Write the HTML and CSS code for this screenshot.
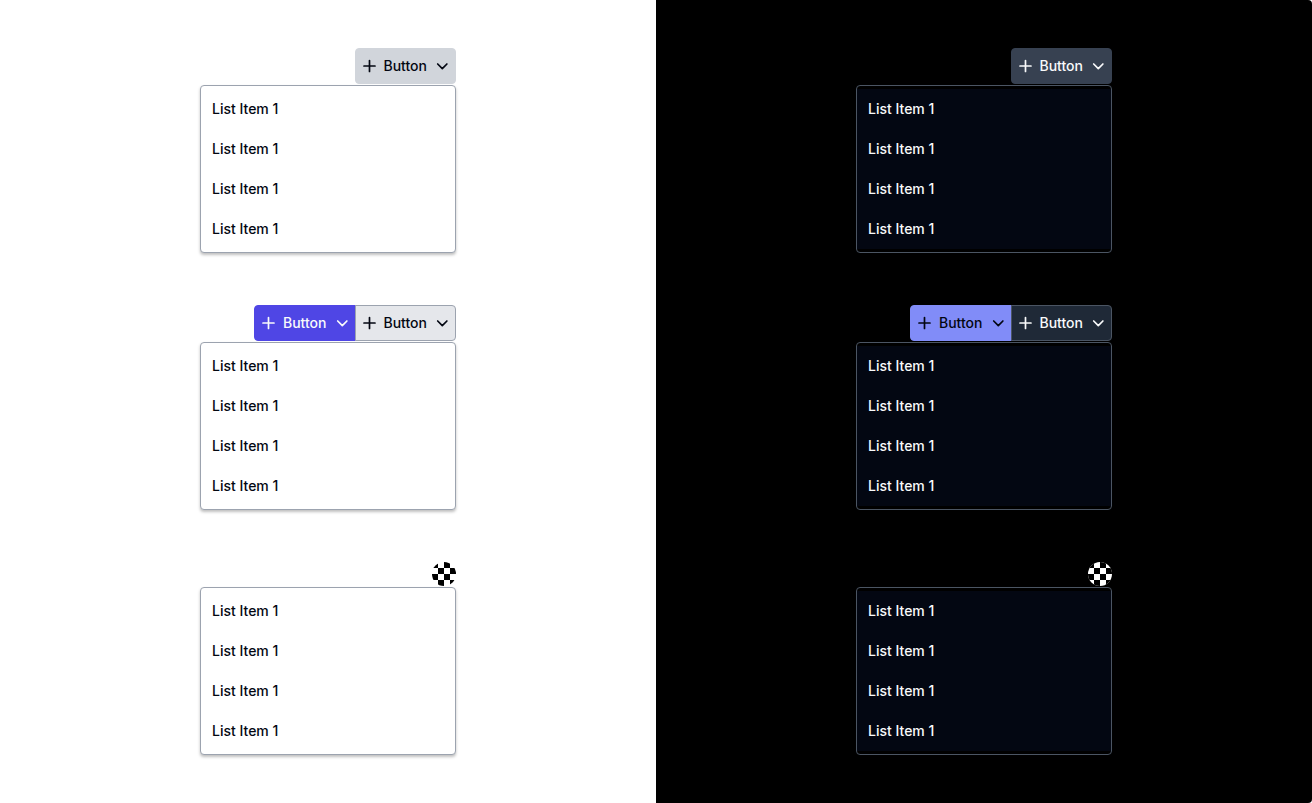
FILE: index.html
```html
<!DOCTYPE html>
<html lang="en">
<head>
<meta charset="utf-8">
<meta name="viewport" content="width=device-width, initial-scale=1">
<title>Dropdowns</title>
<link rel="stylesheet" href="styles.css">
</head>
<body>
<svg class="symbols" aria-hidden="true">
  <symbol id="plus" viewBox="0 0 20 20"><path d="M10.500 4.500v11M5 10h11"/></symbol>
  <symbol id="chevron" viewBox="0 0 20 20"><path d="M5.700 8l4.600 4.600L14.900 8"/></symbol>
  <symbol id="checker" viewBox="0 0 24 24">
    <path fill="#fff" d="M0 0h24v24H0z"/>
    <path d="M0 0h6v6H0zM12 0h6v6h-6zM6 6h6v6H6zM18 6h6v6h-6zM0 12h6v6H0zM12 12h6v6h-6zM6 18h6v6H6zM18 18h6v6h-6z"/>
  </symbol>
</svg>
<main class="themes">
  <section class="theme theme-light">
    <div class="dropdown">
      <div class="triggers"><button class="button base"><svg class="icon"><use href="#plus"/></svg>Button<svg class="icon"><use href="#chevron"/></svg></button></div>
      <ul class="menu"><li><button class="item">List Item 1</button></li><li><button class="item">List Item 1</button></li><li><button class="item">List Item 1</button></li><li><button class="item">List Item 1</button></li></ul>
    </div>
    <div class="dropdown">
      <div class="triggers"><button class="button primary"><svg class="icon"><use href="#plus"/></svg>Button<svg class="icon"><use href="#chevron"/></svg></button><button class="button secondary"><svg class="icon"><use href="#plus"/></svg>Button<svg class="icon"><use href="#chevron"/></svg></button></div>
      <ul class="menu"><li><button class="item">List Item 1</button></li><li><button class="item">List Item 1</button></li><li><button class="item">List Item 1</button></li><li><button class="item">List Item 1</button></li></ul>
    </div>
    <div class="dropdown">
      <div class="triggers"><button class="avatar" aria-label="Open menu"><svg class="checker"><use href="#checker"/></svg></button></div>
      <ul class="menu"><li><button class="item">List Item 1</button></li><li><button class="item">List Item 1</button></li><li><button class="item">List Item 1</button></li><li><button class="item">List Item 1</button></li></ul>
    </div>
  </section>
  <section class="theme theme-dark">
    <div class="dropdown">
      <div class="triggers"><button class="button base"><svg class="icon"><use href="#plus"/></svg>Button<svg class="icon"><use href="#chevron"/></svg></button></div>
      <ul class="menu"><li><button class="item">List Item 1</button></li><li><button class="item">List Item 1</button></li><li><button class="item">List Item 1</button></li><li><button class="item">List Item 1</button></li></ul>
    </div>
    <div class="dropdown">
      <div class="triggers"><button class="button primary"><svg class="icon"><use href="#plus"/></svg>Button<svg class="icon"><use href="#chevron"/></svg></button><button class="button secondary"><svg class="icon"><use href="#plus"/></svg>Button<svg class="icon"><use href="#chevron"/></svg></button></div>
      <ul class="menu"><li><button class="item">List Item 1</button></li><li><button class="item">List Item 1</button></li><li><button class="item">List Item 1</button></li><li><button class="item">List Item 1</button></li></ul>
    </div>
    <div class="dropdown">
      <div class="triggers"><button class="avatar" aria-label="Open menu"><svg class="checker"><use href="#checker"/></svg></button></div>
      <ul class="menu"><li><button class="item">List Item 1</button></li><li><button class="item">List Item 1</button></li><li><button class="item">List Item 1</button></li><li><button class="item">List Item 1</button></li></ul>
    </div>
  </section>
</main>
</body>
</html>
```
FILE: styles.css
```css
* { box-sizing: border-box; }
body { margin: 0; background: #fff; font-family: Inter, "Liberation Sans", sans-serif; }
button { font: inherit; color: inherit; margin: 0; border: 0; background: none; cursor: pointer; }
.symbols { display: none; }
.themes { display: grid; grid-template-columns: 1fr 1fr; min-height: 100vh; }
.theme {
  display: flex; flex-direction: column; align-items: center; gap: 52px;
  padding: 48px 24px; background: var(--page); color: var(--text);
}
.theme-light {
  --page: #fff; --text: #030712; --line: #9ca3af; --item: #fff;
  --base: #d1d5db; --primary: #4f46e5; --on-primary: #f9fafb; --secondary: #e5e7eb;
  --shadow: 0 2px 3px rgb(0 0 0 / 25%);
}
.theme-dark {
  --page: #000; --text: #f9fafb; --line: #4b5563; --item: #030712;
  --base: #374151; --primary: #818cf8; --on-primary: #030712; --secondary: #1f2937;
  --shadow: none;
  border-radius: 0 4px 4px 0;
}
.dropdown { display: flex; flex-direction: column; gap: 1px; width: 256px; max-width: 100%; }
.triggers { display: flex; justify-content: flex-end; }
.button {
  display: flex; align-items: center; gap: 5px; height: 36px; padding: 0 3px;
  border: 1px solid transparent; border-radius: 4px;
  font-size: 14px; font-weight: 500; line-height: 20px;
}
.base { background: var(--base); border-color: var(--base); }
.primary { background: var(--primary); border-color: var(--primary); color: var(--on-primary); border-radius: 4px 0 0 4px; }
.secondary { background: var(--secondary); border-color: var(--line); border-radius: 0 4px 4px 0; }
.primary + .secondary { margin-left: -1px; }
.icon {
  width: 20px; height: 20px; fill: none; stroke: currentColor;
  stroke-width: 1.7; stroke-linecap: round; stroke-linejoin: round;
}
.avatar { padding: 0; border-radius: 50%; overflow: hidden; }
.checker { display: block; width: 24px; height: 24px; fill: #000; }
.menu {
  list-style: none; margin: 0; padding: 3px 0; background: var(--page);
  border: 1px solid var(--line); border-radius: 4px; box-shadow: var(--shadow);
}
.item {
  display: block; width: 100%; padding: 10px 11px; background: var(--item);
  font-size: 14px; font-weight: 500; line-height: 20px; text-align: left;
}
```
